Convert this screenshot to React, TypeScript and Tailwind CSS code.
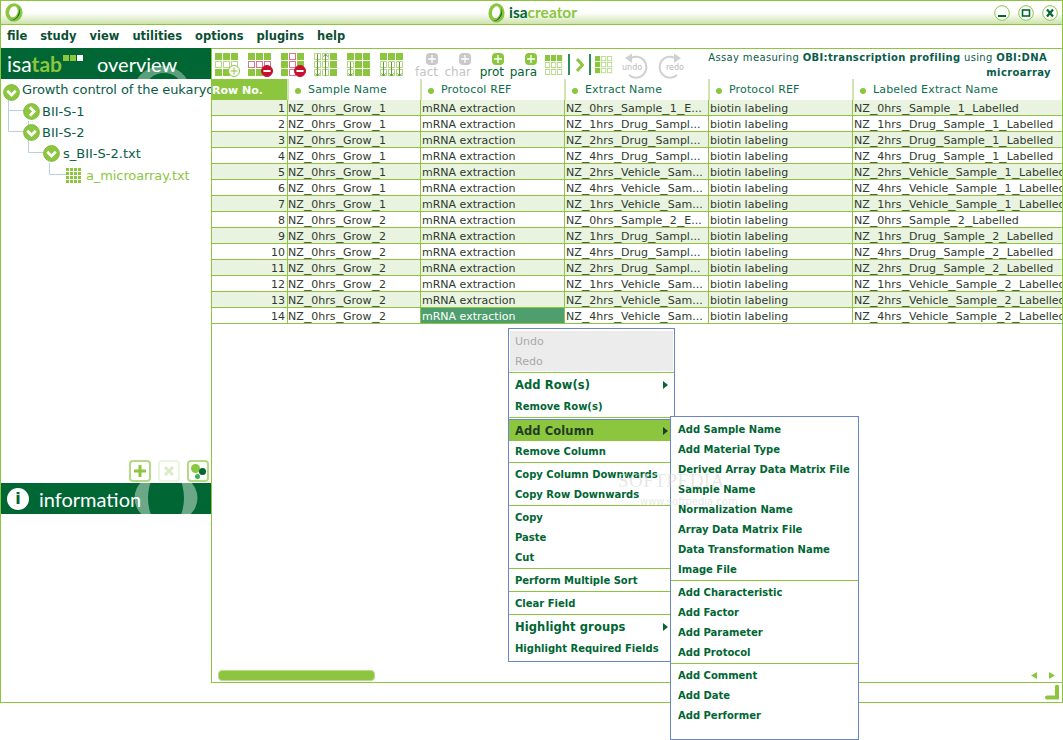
import React from "react";

const G = "#8cc63f";
const D = "#006633";

function Cells({ rows, size = 7, gap = 1, w, h }: { rows: string[]; size?: number; gap?: number; w?: number; h?: number }) {
  const vw = rows[0].length * (size + gap);
  const vh = rows.length * (size + gap);
  return (
    <svg width={w ?? vw} height={h ?? vh} viewBox={`0 0 ${vw} ${vh}`} preserveAspectRatio="none" className="block">
      {rows.map((r, y) =>
        r.split("").map((c, x) => {
          const px = x * (size + gap);
          const py = y * (size + gap);
          if (c === "f") return <rect key={`${x}-${y}`} x={px} y={py} width={size} height={size} fill={G} />;
          if (c === "o") return <rect key={`${x}-${y}`} x={px + 0.5} y={py + 0.5} width={size - 1} height={size - 1} fill="#fff" stroke="#b4d985" />;
          if (c === "r") return <rect key={`${x}-${y}`} x={px + 0.5} y={py + 0.5} width={size - 1} height={size - 1} fill="#fff" stroke="#d9748a" />;
          return null;
        })
      )}
    </svg>
  );
}

function Badge({ plus }: { plus?: boolean }) {
  return (
    <svg width="12" height="12" viewBox="0 0 12 12" className="absolute right-0 bottom-0">
      <circle cx="6" cy="6" r="5.5" fill={plus ? "#fff" : "#c8102e"} stroke={plus ? G : "#c8102e"} />
      <path d={plus ? "M6 2.5v7M2.5 6h7" : "M2.5 6h7"} stroke={plus ? G : "#fff"} strokeWidth={plus ? 1 : 2} />
    </svg>
  );
}

function ToolGrid({ rows, badge, arrows }: { rows: string[]; badge?: "add" | "del"; arrows?: string }) {
  return (
    <div className="relative w-[25px] h-6 shrink-0">
      <Cells rows={rows} />
      {badge === "add" && <Badge plus />}
      {badge === "del" && <Badge />}
      {arrows && (
        <svg width="24" height="24" viewBox="0 0 24 24" className="absolute left-0 top-0">
          <path d={arrows} stroke="#5f9e2a" strokeWidth="1" fill="none" />
        </svg>
      )}
    </div>
  );
}

function PlusTool({ label, on }: { label: string; on: boolean }) {
  return (
    <div className="flex flex-col items-end w-[33px] shrink-0">
      <div className={`w-3 h-3 rounded-sm flex items-center justify-center ${on ? "bg-[#8cc63f]" : "bg-[#c9c9c9]"}`}>
        <svg width="10" height="10" viewBox="0 0 10 10">
          <path d="M5 1v8M1 5h8" stroke="#fff" strokeWidth="1.3" />
        </svg>
      </div>
      <span className={`text-[12px] leading-[14px] ${on ? "text-[#006633]" : "text-[#c4c4c4]"}`}>{label}</span>
    </div>
  );
}

function UndoIcon({ label, flip }: { label: string; flip?: boolean }) {
  return (
    <div className="relative w-[27px] h-[26px] shrink-0">
      <svg width="27" height="26" viewBox="0 0 27 26" className="absolute inset-0" style={flip ? { transform: "scaleX(-1)" } : undefined}>
        <path d="M8 5.5 A10.5 10.5 0 1 1 7 22" fill="none" stroke="#d0d0d0" strokeWidth="2" />
        <path d="M3 5 L10 0.5 L10 10 Z" fill="#d0d0d0" />
      </svg>
      <span className={`absolute top-[10px] text-[8px] leading-[10px] text-[#b9b9b9] ${flip ? "right-0" : "left-0"}`}>{label}</span>
    </div>
  );
}

function Toggle({ dir, className = "" }: { dir: "down" | "right"; className?: string }) {
  return (
    <svg width="17" height="17" viewBox="0 0 20 20" className={`shrink-0 relative ${className}`}>
      <circle cx="10" cy="10" r="9.3" fill={G} stroke="#7ab534" strokeWidth="1" />
      <path d={dir === "down" ? "M5 8 L10 13 L15 8" : "M8 5 L13 10 L8 15"} fill="none" stroke="#fff" strokeWidth="3.2" />
    </svg>
  );
}

function RingLogo({ w, h }: { w: number; h: number }) {
  return (
    <svg width={w} height={h} viewBox="0 0 20 20" preserveAspectRatio="none" className="shrink-0">
      <ellipse cx="10" cy="10" rx="9.5" ry="9.7" fill={G} />
      <path d="M13 0.8 A9.5 9.7 0 0 1 4 17.6 A 9 9 0 0 0 15 11 A 8 8 0 0 0 13 0.8Z" fill={D} />
      <ellipse cx="9.4" cy="9.2" rx="4.6" ry="6" fill="#fff" transform="rotate(18 9.4 9.2)" />
    </svg>
  );
}

function WinBtn({ kind }: { kind: "min" | "max" | "close" }) {
  return (
    <svg width="16" height="16" viewBox="0 0 16 16" className="block">
      <circle cx="8" cy="8" r="7.3" fill="#fff" stroke={G} strokeWidth="1" />
      {kind === "min" && <path d="M4 11h8" stroke={D} strokeWidth="2" />}
      {kind === "max" && <rect x="4.5" y="5" width="7" height="6" fill="none" stroke={D} strokeWidth="1.6" />}
      {kind === "close" && <path d="M5 4.5 L11 11.5 M11 4.5 L5 11.5" stroke={D} strokeWidth="2.2" />}
    </svg>
  );
}

const headers = ["Sample Name", "Protocol REF", "Extract Name", "Protocol REF", "Labeled Extract Name"];

const rows: [string, string, string][] = [
  ["NZ_0hrs_Grow_1", "NZ_0hrs_Sample_1_E...", "NZ_0hrs_Sample_1_Labelled"],
  ["NZ_0hrs_Grow_1", "NZ_1hrs_Drug_Sampl...", "NZ_1hrs_Drug_Sample_1_Labelled"],
  ["NZ_0hrs_Grow_1", "NZ_2hrs_Drug_Sampl...", "NZ_2hrs_Drug_Sample_1_Labelled"],
  ["NZ_0hrs_Grow_1", "NZ_4hrs_Drug_Sampl...", "NZ_4hrs_Drug_Sample_1_Labelled"],
  ["NZ_0hrs_Grow_1", "NZ_2hrs_Vehicle_Sam...", "NZ_2hrs_Vehicle_Sample_1_Labelled"],
  ["NZ_0hrs_Grow_1", "NZ_4hrs_Vehicle_Sam...", "NZ_4hrs_Vehicle_Sample_1_Labelled"],
  ["NZ_0hrs_Grow_1", "NZ_1hrs_Vehicle_Sam...", "NZ_1hrs_Vehicle_Sample_1_Labelled"],
  ["NZ_0hrs_Grow_2", "NZ_0hrs_Sample_2_E...", "NZ_0hrs_Sample_2_Labelled"],
  ["NZ_0hrs_Grow_2", "NZ_1hrs_Drug_Sampl...", "NZ_1hrs_Drug_Sample_2_Labelled"],
  ["NZ_0hrs_Grow_2", "NZ_4hrs_Drug_Sampl...", "NZ_4hrs_Drug_Sample_2_Labelled"],
  ["NZ_0hrs_Grow_2", "NZ_2hrs_Drug_Sampl...", "NZ_2hrs_Drug_Sample_2_Labelled"],
  ["NZ_0hrs_Grow_2", "NZ_1hrs_Vehicle_Sam...", "NZ_1hrs_Vehicle_Sample_2_Labelled"],
  ["NZ_0hrs_Grow_2", "NZ_2hrs_Vehicle_Sam...", "NZ_2hrs_Vehicle_Sample_2_Labelled"],
  ["NZ_0hrs_Grow_2", "NZ_4hrs_Vehicle_Sam...", "NZ_4hrs_Vehicle_Sample_2_Labelled"],
];

function Wide({ t }: { t: string }) {
  const parts = t.split("_");
  return (
    <>
      {parts.map((p, i) => (
        <React.Fragment key={i}>
          {p}
          {i < parts.length - 1 && <span className="inline-block origin-left scale-x-[1.36] mr-[2px]">_</span>}
        </React.Fragment>
      ))}
    </>
  );
}

function Cell({ children, selected, bg, first }: { children: React.ReactNode; selected?: boolean; bg: string; first?: boolean }) {
  return (
    <div className={`h-4 min-w-0 border-l border-b border-[#8cc63f] overflow-hidden whitespace-nowrap text-[11px] leading-[18px] ${first ? "" : "pl-px"} ${selected ? "bg-[#4f9e6e] text-white" : `text-[#2f3b30] ${bg}`}`}>
      {children}
    </div>
  );
}

function MenuItem({ label, big, active, arrow, disabled, tall, sub }: { label: string; big?: boolean; active?: boolean; arrow?: boolean; disabled?: boolean; tall?: boolean; sub?: boolean }) {
  return (
    <div
      className={`relative flex items-center font-bold whitespace-nowrap ${sub ? "pl-[7px]" : disabled ? "pl-[5px] pt-[2px]" : "pl-1.5"} ${big ? "h-[21px] pt-[2px] text-[11.5px] tracking-[0.1px]" : tall ? "h-[21px] pt-[2px] text-[10px]" : "h-5 text-[10px]"} ${
        active ? "bg-[#8cc63f] text-[#1f3d24]" : disabled ? "text-[#a9a9a9] font-normal text-[11px]" : "text-[#006633]"
      }`}
    >
      {label}
      {arrow && (
        <svg width="5" height="8" viewBox="0 0 5 8" className="absolute right-1.5 top-[7px]">
          <path d="M0 0 L5 4 L0 8 Z" fill={active ? "#1f3d24" : D} />
        </svg>
      )}
    </div>
  );
}

function Sep() {
  return <div className="h-px bg-[#8cc63f] my-[1px] shrink-0" />;
}

export default function App() {
  return (
    <div className="relative w-[1063px] h-[740px] overflow-hidden bg-white font-['DejaVu_Sans','Liberation_Sans',sans-serif]">
      {/* window */}
      <div className="h-[703px] flex flex-col border border-[#8cc63f]">
        {/* title bar */}
        <div className="h-6 shrink-0 flex items-center pl-1 pr-[4px] bg-gradient-to-b from-white via-white to-[#cfe3ac] border-b border-[#8cc63f]">
          <div className="flex-1 flex">
            <RingLogo w={18} h={19} />
          </div>
          <div className="flex items-center gap-1 ml-[2px] font-['Lato','Liberation_Sans',sans-serif]">
            <RingLogo w={17} h={20} />
            <span className="text-[15.5px] font-bold leading-none">
              <span className="text-[#006633]">isa</span>
              <span className="text-[#8cc63f]">creator</span>
            </span>
          </div>
          <div className="flex-1 flex items-center justify-end gap-2">
            <WinBtn kind="min" />
            <WinBtn kind="max" />
            <WinBtn kind="close" />
          </div>
        </div>

        {/* menu */}
        <div className="h-[23px] shrink-0 flex items-center gap-[13px] pl-1.5 pt-px text-[11.5px] font-bold text-[#0b4f33]">
          <span>file</span>
          <span>study</span>
          <span>view</span>
          <span>utilities</span>
          <span>options</span>
          <span>plugins</span>
          <span>help</span>
        </div>

        <div className="flex-1 min-h-0 flex flex-col">
          <div className="flex-1 min-h-0 flex">
            {/* left */}
            <div className="w-[211px] shrink-0 flex flex-col border-r border-[#8cc63f]">
              <div className="relative h-[31px] shrink-0 bg-[#006633] overflow-hidden flex items-center pl-[6px] text-[21px] text-white font-['Lato','Liberation_Sans',sans-serif]">
                <svg width="210" height="31" viewBox="0 0 210 31" className="absolute left-0 top-0">
                  <ellipse cx="161" cy="40" rx="27" ry="22" fill="#5c9f7d" />
                  <ellipse cx="163" cy="42" rx="19" ry="17" fill={D} />
                </svg>
                <span className="relative">isa</span>
                <span className="relative font-bold text-[#8cc63f]">tab</span>
                <span className="relative flex gap-px self-start mt-[7px] ml-px">
                  <span className="w-[6px] h-[6px] bg-[#8cc63f]" />
                  <span className="w-[6px] h-[6px] bg-[#8cc63f]" />
                  <span className="w-[6px] h-[6px] bg-white" />
                </span>
                <span className="relative ml-[14px] text-[20px]">overview</span>
              </div>
              <div className="relative flex-1 min-h-0 overflow-hidden text-[13px] text-[#0a5c4a] whitespace-nowrap flex flex-col">
                <svg width="70" height="100" viewBox="0 0 70 100" className="absolute left-0 top-0">
                  <path d="M7.5 20V31.5H23M7.5 31.5V52.5H23M27.5 42V73.5H43M48.5 84V95.5H65" fill="none" stroke="#b9cfe3" strokeWidth="1" />
                </svg>
                <div className="relative h-[22px] flex items-center gap-[2px] pl-[2px]">
                  <Toggle dir="down" className="top-[2px]" />
                  <span className="tracking-[-0.1px]">Growth control of the eukaryo</span>
                </div>
                <div className="relative h-[21px] flex items-center gap-[2px] pl-[22px]">
                  <Toggle dir="right" />
                  <span>BII-S-1</span>
                </div>
                <div className="relative h-[21px] flex items-center gap-[2px] pl-[22px]">
                  <Toggle dir="down" />
                  <span>BII-S-2</span>
                </div>
                <div className="relative h-[21px] flex items-center gap-[3px] pl-[42px]">
                  <Toggle dir="down" />
                  <span>s_BII-S-2.txt</span>
                </div>
                <div className="relative h-[24px] flex items-center gap-[4px] pl-[65px]">
                  <Cells rows={["ffff", "ffff", "ffff", "ffff"]} size={3} gap={1} />
                  <span className="text-[#8cc63f] tracking-[-0.1px]">a_microarray.txt</span>
                </div>
              </div>
              <div className="h-[23px] shrink-0 flex items-start justify-end gap-[7px] pr-[2px]">
                <div className="w-[22px] h-[22px] border-2 border-[#b5da85] rounded flex items-center justify-center">
                  <svg width="14" height="14" viewBox="0 0 14 14"><path d="M7 1v12M1 7h12" stroke={G} strokeWidth="3" /></svg>
                </div>
                <div className="w-[22px] h-[22px] border-2 border-[#ecf5df] rounded flex items-center justify-center">
                  <svg width="12" height="12" viewBox="0 0 12 12"><path d="M2 2l8 8M10 2l-8 8" stroke="#dcecc6" strokeWidth="3" /></svg>
                </div>
                <div className="w-[22px] h-[22px] border-2 border-[#b5da85] rounded relative">
                  <span className="absolute left-[2px] top-[2px] w-[9px] h-[9px] rounded-full bg-[#8cc63f]" />
                  <span className="absolute right-[1px] top-[6px] w-[7px] h-[7px] rounded-full bg-[#006633]" />
                  <span className="absolute left-[6px] bottom-[1px] w-[5px] h-[5px] rounded-full bg-[#39b54a]" />
                </div>
              </div>
              <div className="relative h-[31px] shrink-0 bg-[#006633] overflow-hidden flex items-center pl-[6px] gap-[10px] font-['Lato','Liberation_Sans',sans-serif]">
                <svg width="210" height="31" viewBox="0 0 210 31" className="absolute left-0 top-0">
                  <ellipse cx="165" cy="15" rx="31.5" ry="26" fill="#6aa888" />
                  <ellipse cx="165" cy="15" rx="18" ry="30" fill={D} />
                </svg>
                <div className="relative w-[22px] h-[22px] rounded-full bg-white flex items-center justify-center text-[#006633] text-[16px] font-bold leading-none font-['DejaVu_Sans',sans-serif]">i</div>
                <span className="relative text-[20px] text-white">information</span>
              </div>
              <div className="h-[169px] shrink-0" />
            </div>

            {/* right */}
            <div className="flex-1 min-w-0 flex flex-col border-b border-[#8cc63f]">
              {/* toolbar */}
              <div className="h-[31px] shrink-0 flex items-start pl-[3px] pt-[4px] border-t border-[#8cc63f]">
                <div className="flex gap-[8px]">
                  <ToolGrid rows={["fff", "ooo", "ff "]} badge="add" />
                  <ToolGrid rows={["fff", "rrr", "ff "]} badge="del" />
                  <ToolGrid rows={["frf", "frf", "fr "]} badge="del" />
                  <ToolGrid rows={["oof", "oof", "oof"]} arrows="M3.5 1V23M1.5 20.5L3.5 23L5.5 20.5M11.5 1V23M9.5 3.5L11.5 1L13.5 3.5" />
                  <ToolGrid rows={["fff", "off", "off"]} arrows="M3.5 9V23M1.5 20.5L3.5 23L5.5 20.5" />
                  <ToolGrid rows={["fff", "ooo", "ooo"]} arrows="M3.5 9V23M1.5 20.5L3.5 23L5.5 20.5M11.5 9V23M9.5 20.5L11.5 23L13.5 20.5M19.5 9V23M17.5 20.5L19.5 23L21.5 20.5" />
                </div>
                <div className="flex">
                  <PlusTool label="fact" on={false} />
                  <PlusTool label="char" on={false} />
                  <PlusTool label="prot" on />
                  <PlusTool label="para" on />
                </div>
                <div className="ml-[8px] mt-[2px]"><Cells rows={["fff", "ooo", "ooo"]} size={6} w={18} h={21} /></div>
                <div className="w-0.5 h-[21px] mt-px ml-[5px] bg-[#2f8a5c]" />
                <svg width="8" height="14" viewBox="0 0 8 14" className="ml-[6px] mt-[5px]"><path d="M1 1l5.5 6-5.5 6" fill="none" stroke={G} strokeWidth="3" /></svg>
                <div className="w-0.5 h-[21px] mt-px ml-[5px] bg-[#2f8a5c]" />
                <div className="ml-[4px] mt-[3px]"><Cells rows={["foo", "foo", "foo"]} size={6} w={18} h={18} /></div>
                <div className="flex gap-[8px] ml-[9px]">
                  <UndoIcon label="undo" />
                  <UndoIcon label="redo" flip />
                </div>
                <div className="flex-1 -mt-[3px] text-right text-[10px] leading-[15px] tracking-[0.35px] text-[#0a5c4a] pr-[11px] whitespace-nowrap">
                  <div className="mr-[4px]">Assay measuring <b>OBI:transcription profiling</b> using <b>OBI:DNA</b></div>
                  <div><b>microarray</b></div>
                </div>
              </div>

              {/* table */}
              <div className="grid grid-cols-[75px_133px_144px_144px_144px_minmax(0,1fr)]">
                <div className="h-[21px] bg-[#8cc63f] text-white text-[11px] font-bold leading-[23px]">Row No.</div>
                {headers.map((h, i) => (
                  <div key={i} className="h-[21px] flex items-center text-[11px] tracking-[0.15px] text-[#0e6e4e] gap-[7px] pl-[6px] pt-[2px] border-l-2 border-[#cfe4b0]">
                    <span className="w-[6px] h-[6px] rounded-full bg-[#8cc63f]" />
                    {h}
                  </div>
                ))}
                {rows.flatMap((r, i) => {
                  const bg = i % 2 === 0 ? "bg-[#e9f3df]" : "bg-white";
                  return [
                    <div key={`n${i}`} className={`h-4 text-right pr-0.5 border-b border-[#8cc63f] text-[11px] leading-[18px] overflow-hidden text-[#2f3b30] ${bg}`}>{i + 1}</div>,
                    <Cell key={`a${i}`} bg={bg} first><Wide t={r[0]} /></Cell>,
                    <Cell key={`b${i}`} bg={bg} selected={i === 13}>mRNA extraction</Cell>,
                    <Cell key={`c${i}`} bg={bg}><Wide t={r[1]} /></Cell>,
                    <Cell key={`d${i}`} bg={bg}>biotin labeling</Cell>,
                    <Cell key={`e${i}`} bg={bg}><Wide t={r[2]} /></Cell>,
                  ];
                })}
              </div>

              <div className="flex-1" />
              {/* scrollbar */}
              <div className="h-[13px] shrink-0 flex items-center justify-between pl-[6px] pr-[7px] pb-[1px]">
                <div className="w-[157px] h-[11px] rounded-sm bg-[#8cc63f] border border-[#b9dc8b]" />
                <div className="flex gap-[12px]">
                  <svg width="6" height="7" viewBox="0 0 6 7"><path d="M6 0v7L0 3.5Z" fill={G} /></svg>
                  <svg width="6" height="7" viewBox="0 0 6 7"><path d="M0 0v7L6 3.5Z" fill={G} /></svg>
                </div>
              </div>
            </div>
          </div>
          {/* bottom bar */}
          <div className="h-[19px] shrink-0 flex items-center justify-end pr-[2px]">
            <svg width="15" height="15" viewBox="0 0 15 15"><path d="M12 1.5V12.5H2" fill="none" stroke={G} strokeWidth="4" strokeLinecap="round" /></svg>
          </div>
        </div>
      </div>

      {/* context menu */}
      <div className="absolute left-[508px] top-[328px] w-[167px] h-[334px] bg-white border border-[#6a85c9] flex flex-col">
        <div className="mx-[1px] mt-[2px] bg-[#ececec] h-[40px] shrink-0 flex flex-col">
          <MenuItem label="Undo" disabled />
          <MenuItem label="Redo" disabled />
        </div>
        <Sep />
        <MenuItem label="Add Row(s)" big arrow />
        <MenuItem label="Remove Row(s)" tall />
        <Sep />
        <div className="h-px bg-[#6a85c9] shrink-0" />
        <MenuItem label="Add Column" big active arrow />
        <MenuItem label="Remove Column" />
        <Sep />
        <MenuItem label="Copy Column Downwards" />
        <MenuItem label="Copy Row Downwards" />
        <Sep />
        <MenuItem label="Copy" />
        <MenuItem label="Paste" />
        <MenuItem label="Cut" />
        <Sep />
        <MenuItem label="Perform Multiple Sort" />
        <Sep />
        <MenuItem label="Clear Field" />
        <Sep />
        <MenuItem label="Highlight groups" big arrow />
        <MenuItem label="Highlight Required Fields" tall />
      </div>

      {/* sub menu */}
      <div className="absolute left-[670px] top-[416px] w-[189px] h-[324px] bg-white border border-[#6a85c9] flex flex-col pt-[2px]">
        <MenuItem sub label="Add Sample Name" />
        <MenuItem sub label="Add Material Type" />
        <MenuItem sub label="Derived Array Data Matrix File" />
        <MenuItem sub label="Sample Name" />
        <MenuItem sub label="Normalization Name" />
        <MenuItem sub label="Array Data Matrix File" />
        <MenuItem sub label="Data Transformation Name" />
        <MenuItem sub label="Image File" />
        <Sep />
        <MenuItem sub label="Add Characteristic" />
        <MenuItem sub label="Add Factor" />
        <MenuItem sub label="Add Parameter" />
        <MenuItem sub label="Add Protocol" />
        <Sep />
        <MenuItem sub label="Add Comment" />
        <MenuItem sub label="Add Date" />
        <MenuItem sub label="Add Performer" />
      </div>

      {/* watermark */}
      <div className="absolute left-[618px] top-[469px] text-[19px] leading-[24px] text-[#d8d8d8]/60 tracking-[0.5px] pointer-events-none font-['Liberation_Serif',serif]">SOFTPEDIA</div>
      <div className="absolute left-[640px] top-[496px] text-[10px] leading-[12px] text-[#d8d8d8]/60 pointer-events-none">www.softpedia.com</div>
    </div>
  );
}
